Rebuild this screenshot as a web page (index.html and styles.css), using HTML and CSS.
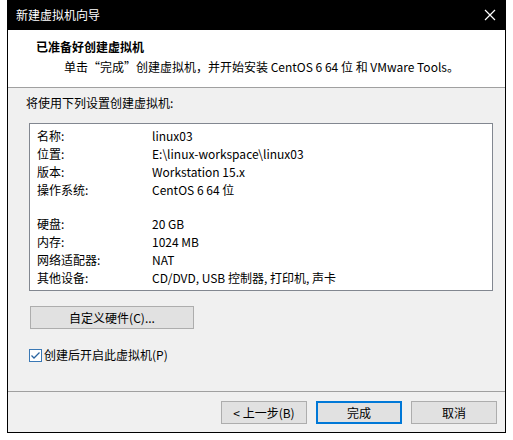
FILE: index.html
```html
<!DOCTYPE html>
<html lang="zh-CN">
<head>
    <meta charset="UTF-8">
    <title>新建虚拟机向导</title>
    <link rel="stylesheet" href="styles.css">
</head>
<body>

    <div class="window">
        <div class="titlebar">
            <span class="title">新建虚拟机向导</span>
            <svg class="close" width="12" height="12" viewBox="0 0 12 12">
                <path d="M1 1 L11 11 M11 1 L1 11" stroke="#fff" stroke-width="1.2" fill="none"/>
            </svg>
        </div>

        <!-- Header -->
        <div class="header">
            <div class="heading">已准备好创建虚拟机</div>
            <div class="subheading">单击“完成”创建虚拟机，并开始安装 CentOS 6 64 位 和 VMware Tools。</div>
        </div>

        <!-- Summary -->
        <div class="content">
            <div class="intro">将使用下列设置创建虚拟机:</div>

            <div class="summary">
                <div class="row"><span class="label">名称:</span><span>linux03</span></div>
                <div class="row"><span class="label">位置:</span><span>E:\linux-workspace\linux03</span></div>
                <div class="row"><span class="label">版本:</span><span>Workstation 15.x</span></div>
                <div class="row"><span class="label">操作系统:</span><span>CentOS 6 64 位</span></div>
                <div class="spacer"></div>
                <div class="row"><span class="label">硬盘:</span><span>20 GB</span></div>
                <div class="row"><span class="label">内存:</span><span>1024 MB</span></div>
                <div class="row"><span class="label">网络适配器:</span><span>NAT</span></div>
                <div class="row"><span class="label">其他设备:</span><span>CD/DVD, USB 控制器, 打印机, 声卡</span></div>
            </div>

            <button class="btn custom">自定义硬件(C)...</button>

            <label class="check">
                <svg class="box" width="13" height="13" viewBox="0 0 13 13">
                    <rect x="0.5" y="0.5" width="12" height="12" fill="#fff" stroke="#3a78b5"/>
                    <path d="M2.5 6.5 L5 9 L10.5 3.5" stroke="#2a64a0" stroke-width="1.3" fill="none"/>
                </svg>
                <span>创建后开启此虚拟机(P)</span>
            </label>
        </div>

        <!-- Footer -->
        <div class="footer">
            <button class="btn">&lt; 上一步(B)</button>
            <button class="btn default">完成</button>
            <button class="btn">取消</button>
        </div>
    </div>

</body>
</html>
```

FILE: styles.css
```css
body {
    margin: 0;
    background: #fff;
    font-family: "Noto Sans CJK SC", "Noto Sans", sans-serif;
    font-size: 12px;
    color: #000;
}

.window {
    margin-left: 7px;
    width: 499px;
    height: 433px;
    box-sizing: border-box;
    border: 1px solid #000;
    border-top: none;
    background: #f0f0f0;
    display: flex;
    flex-direction: column;
}

.titlebar {
    height: 30px;
    background: #000;
    color: #fff;
    display: flex;
    align-items: center;
    justify-content: space-between;
    padding: 0 9px 0 8px;
}

.title {
    line-height: 18px;
}

.header {
    background: #fff;
    height: 58px;
    box-sizing: border-box;
    padding-top: 8px;
    border-bottom: 1px solid #a0a0a0;
}

.heading {
    font-weight: bold;
    line-height: 18px;
    padding-left: 28px;
}

.subheading {
    line-height: 18px;
    margin-top: 2px;
    padding-left: 56px;
}

.content {
    flex: 1;
    padding: 6px 12px 0 18px;
    display: flex;
    flex-direction: column;
    align-items: flex-start;
    border-bottom: 1px solid #a0a0a0;
}

.intro {
    line-height: 18px;
}

.summary {
    margin: 11px 0 0 3px;
    align-self: stretch;
    background: #fff;
    border: 1px solid #828790;
    padding: 3px 7px 3px 7px;
}

.row {
    display: flex;
    line-height: 18px;
    height: 18px;
}

.label {
    width: 115px;
    flex-shrink: 0;
}

.spacer {
    height: 16px;
}

.btn {
    font-family: inherit;
    font-size: 12px;
    color: #000;
    background: #e1e1e1;
    border: 1px solid #adadad;
    height: 23px;
    padding: 0;
    line-height: 20px;
}

.btn.custom {
    margin: 15px 0 0 4px;
    width: 164px;
}

.check {
    margin: 17px 0 0 3px;
    display: flex;
    align-items: center;
    gap: 2px;
    line-height: 18px;
}

.check .box {
    display: block;
}

.footer {
    height: 40px;
    box-sizing: border-box;
    display: flex;
    justify-content: flex-end;
    align-items: flex-start;
    gap: 9px;
    padding: 9px 8px 0 0;
}

.footer .btn {
    width: 86px;
}

.btn.default {
    border: 2px solid #0078d7;
}
```
